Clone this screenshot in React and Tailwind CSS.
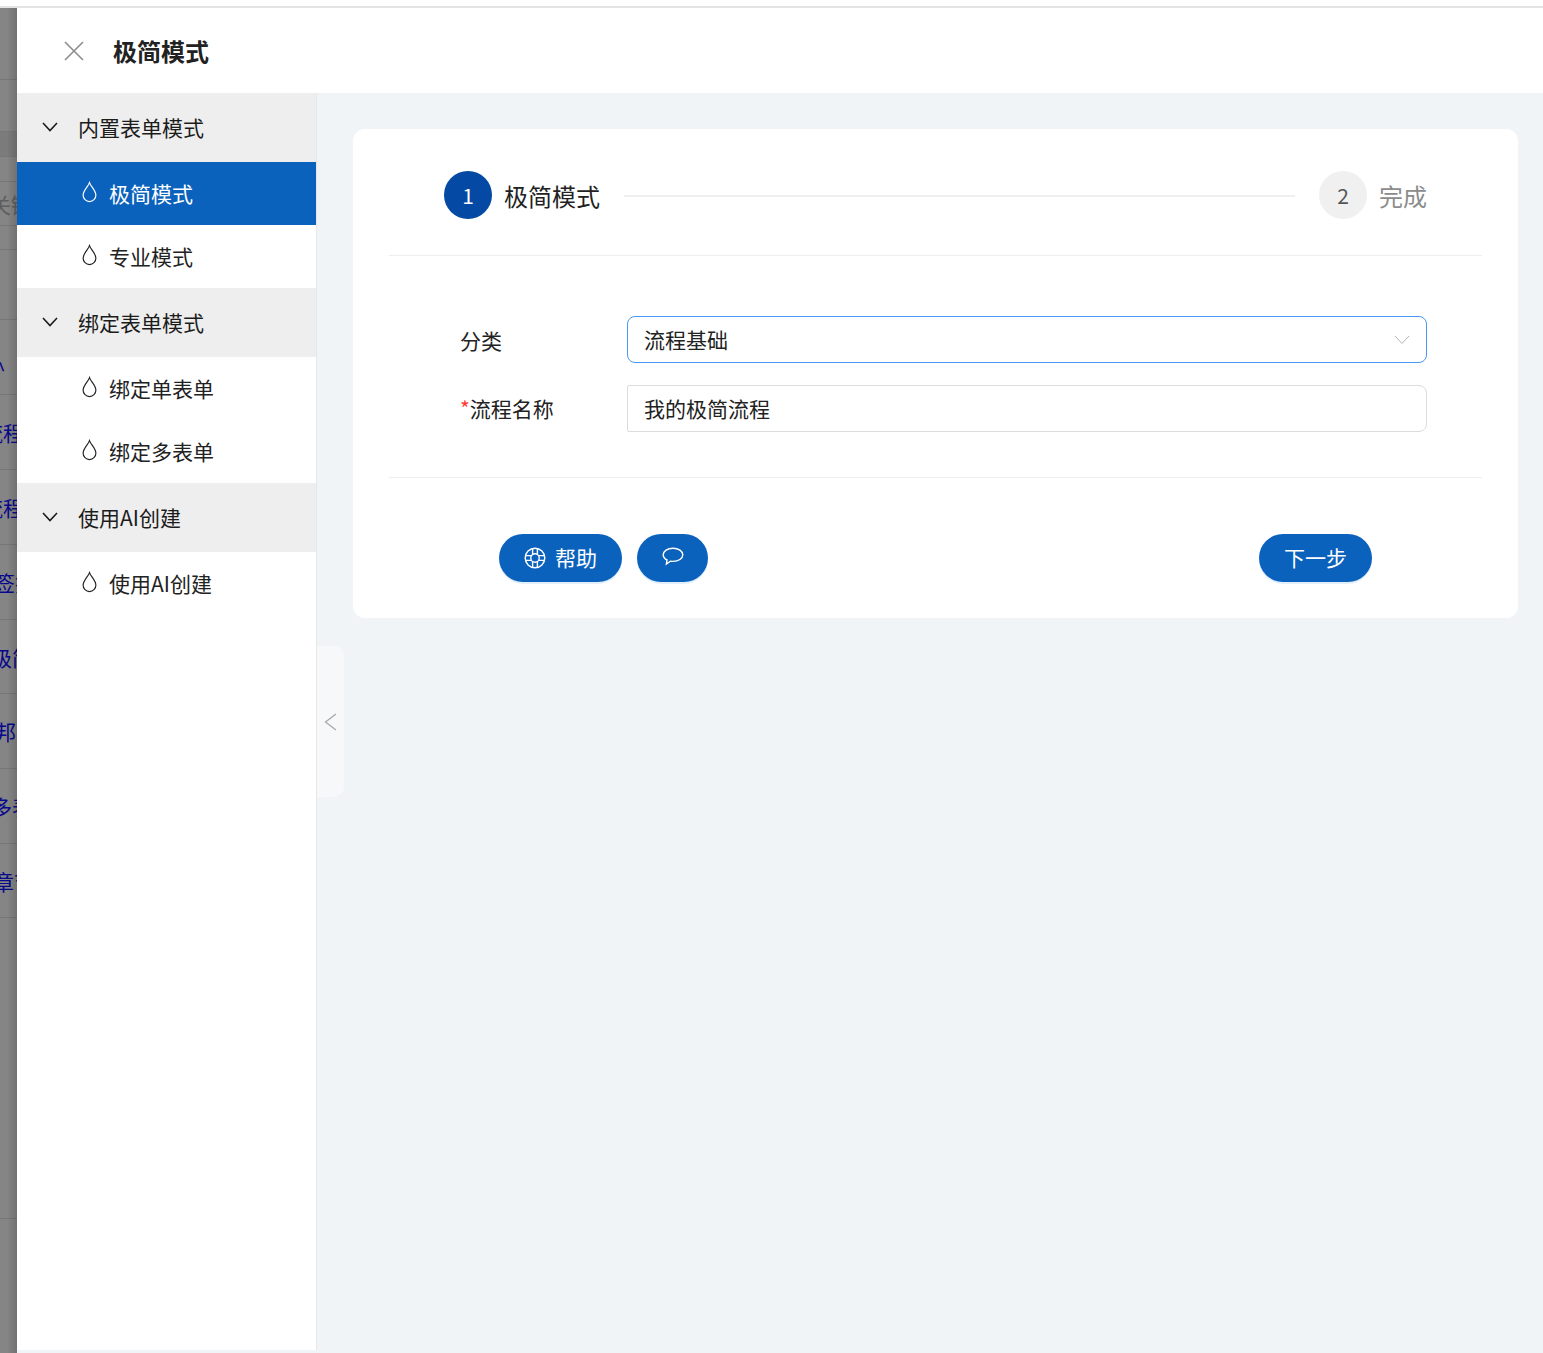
const FONT = "font-['Noto_Sans_CJK_SC','Liberation_Sans',sans-serif]";

const GROUPS = [
  { title: "内置表单模式", items: ["极简模式", "专业模式"] },
  { title: "绑定表单模式", items: ["绑定单表单", "绑定多表单"] },
  { title: "使用AI创建", items: ["使用AI创建"] },
];

// rows of the page behind the drawer, only a sliver of them shows
const BACK_ROWS = [
  { h: "h-[72px]" },
  { h: "h-[52px]" },
  { h: "h-[25px]", band: true },
  { h: "h-[25px]" },
  { h: "h-[44px]", text: "关键", ml: "-ml-[10px] translate-y-px", gray: true },
  { h: "h-[24px]" },
  { h: "h-[70px]" },
  { h: "h-[75px]", text: "^", ml: "-ml-[6px] translate-y-[13px]" },
  { h: "h-[75px]", text: "流程", ml: "-ml-[18px] translate-y-px" },
  { h: "h-[75px]", text: "流程", ml: "-ml-[18px] translate-y-px" },
  { h: "h-[75px]", text: "签批", ml: "-ml-[6px] translate-y-px" },
  { h: "h-[74px]", text: "级简", ml: "-ml-[9px] translate-y-px" },
  { h: "h-[75px]", text: "邦定", ml: "-ml-[5px] translate-y-px" },
  { h: "h-[75px]", text: "多表", ml: "-ml-[9px] translate-y-px" },
  { h: "h-[74px]", text: "章节", ml: "-ml-[7px] translate-y-px" },
  { h: "h-[301px]" },
];

function Drop({ className }) {
  return (
    <svg viewBox="0 0 16 22" fill="none" stroke="currentColor" strokeWidth="1.25" className={className}>
      <path d="M8 1C6.600 5.200 1.200 9.400 1.200 14.400a6.800 6.800 0 0 0 13.600 0C14.800 9.400 9.400 5.200 8 1Z" />
    </svg>
  );
}

function Chevron({ className, width = 1.6 }) {
  return (
    <svg viewBox="0 0 16 10" fill="none" stroke="currentColor" strokeWidth={width} className={className}>
      <path d="M1 1l7 7.500L15 1" />
    </svg>
  );
}

function LifeRing() {
  return (
    <svg viewBox="0 0 22 22" fill="none" stroke="currentColor" strokeWidth="1.4" className="h-[22px] w-[22px]">
      <circle cx="11" cy="11" r="9.800" />
      <circle cx="11" cy="11" r="4.200" />
      <path d="M8.600 1.600v6M13.400 1.600v6M8.600 14.400v6M13.400 14.400v6M1.600 8.600h6M1.600 13.400h6M14.400 8.600h6M14.400 13.400h6" />
    </svg>
  );
}

function Bubble() {
  return (
    <svg viewBox="0 0 22 20" fill="none" stroke="currentColor" strokeWidth="1.4" className="h-[20px] w-[22px] -translate-y-[1px]">
      <path d="M11 1.200c5.500 0 9.800 2.900 9.800 6.600s-4.300 6.600-9.800 6.600c-.9 0-1.700-.1-2.500-.2l-4.100 2.900.6-4.100C2.600 11.800 1.200 9.900 1.200 7.800 1.200 4.100 5.500 1.200 11 1.200Z" />
    </svg>
  );
}

function BackStrip() {
  return (
    <div className="relative w-[17px] shrink-0 overflow-hidden bg-[#858585]">
      {BACK_ROWS.map((row, i) => (
        <div
          key={i}
          className={`${row.h} flex items-center whitespace-nowrap border-b border-[#777777] text-[21px] ${
            row.gray ? "text-[#5e5e5e]" : "text-[#08088c]"
          } ${row.band ? "bg-[#7b7b7b]" : ""}`}
        >
          <span className={row.ml}>{row.text}</span>
        </div>
      ))}
      <div className="absolute inset-y-0 right-0 w-[10px] bg-gradient-to-r from-transparent to-black/15" />
    </div>
  );
}

function SideMenu() {
  return (
    <div className="flex w-[300px] shrink-0 flex-col border-r border-[#e8e8e8] bg-white">
      {GROUPS.map((group) => (
        <div key={group.title}>
          <div className="flex h-[69px] items-center bg-[#eeeeee] pl-[25px] text-[21px] text-[#1c1c1c]">
            <Chevron className="mr-[20px] h-[10px] w-[16px] -translate-y-[1px]" />
            {group.title}
          </div>
          {group.items.map((item) => {
            const active = item === "极简模式";
            return (
              <div
                key={item}
                className={`flex h-[63px] items-center pl-[65px] text-[21px] ${
                  active ? "bg-[#0b62bd] text-white" : "text-[#222222]"
                }`}
              >
                <Drop className="mr-[12px] h-[22px] w-[15px] -translate-y-[2px]" />
                {item}
              </div>
            );
          })}
        </div>
      ))}
    </div>
  );
}

function Step({ num, label, active }) {
  return (
    <div className="flex items-center gap-3">
      <div
        className={`flex h-12 w-12 items-center justify-center rounded-full text-[21px] ${
          active ? "bg-[#0449a3] text-white" : "bg-[#f0f0f0] text-[#555555]"
        }`}
      >
        <span className="translate-y-px">{num}</span>
      </div>
      <span className={`translate-y-px text-2xl ${active ? "text-[#222222]" : "text-[#8c8c8c]"}`}>{label}</span>
    </div>
  );
}

function FormRow({ label, required, focused, value }) {
  return (
    <div className="flex items-center pl-[71px] pr-[55px]">
      <div className={`w-[167px] text-[21px] text-[#222222] ${focused ? "translate-y-px" : ""}`}>
        {required && <span className="text-[#ff3b30]">*</span>}
        {label}
      </div>
      <div
        className={`flex h-[47px] flex-1 items-center justify-between border pl-[16px] pr-[16px] text-[21px] text-[#222222] ${
          focused ? "rounded-[8px] border-[#4a97f5]" : "rounded-l-[2px] rounded-r-[8px] border-[#dcdcdc]"
        }`}
      >
        {value}
        {focused && <Chevron width={1} className="h-[10px] w-[16px] text-[#b5b5b5]" />}
      </div>
    </div>
  );
}

function PillButton({ children, className }) {
  return (
    <button
      className={`flex h-12 items-center justify-center rounded-full bg-[#0b62bd] text-[21px] text-white shadow-[0_2px_0_#e3f0fc] ${className}`}
    >
      {children}
    </button>
  );
}

export default function App() {
  return (
    <div className={`${FONT} flex h-[1353px] w-full flex-col overflow-hidden bg-white`}>
      <div className="h-[8px] shrink-0 border-b-2 border-[#e4e4e4]" />
      <div className="flex min-h-0 flex-1">
        <BackStrip />
        <div className="flex min-w-0 flex-1 flex-col bg-[#f1f4f7]">
          <div className="flex h-[85px] shrink-0 items-center bg-white pl-[47px]">
            <svg viewBox="0 0 20 20" fill="none" stroke="currentColor" strokeWidth="1.6" className="h-5 w-5 text-[#8c8c8c]">
              <path d="M1 1l18 18M19 1L1 19" />
            </svg>
            <span className="ml-[29px] text-2xl font-bold text-[#222222]">极简模式</span>
          </div>
          <div className="flex min-h-0 flex-1 pb-[3px]">
            <SideMenu />
            <div className="relative flex-1 pl-[36px] pr-[25px] pt-[36px]">
              <div className="absolute left-0 top-[553px] flex h-[151px] w-[27px] items-center justify-center rounded-r-[10px] bg-[#f7f8fa]">
                <svg viewBox="0 0 13 18" fill="none" stroke="currentColor" strokeWidth="1.3" className="h-[18px] w-[13px] text-[#a8a8a8]">
                  <path d="M12 1L1.500 9 12 17" />
                </svg>
              </div>
              <div className="h-[489px] rounded-[12px] bg-white px-[36px] pt-[42px]">
                <div className="flex h-[85px] items-start border-b border-[#eeeeee] px-[55px]">
                  <Step num="1" label="极简模式" active />
                  <div className="mx-[24px] mt-[24px] h-[2px] flex-1 bg-[#efefef]" />
                  <Step num="2" label="完成" />
                </div>
                <div className="flex h-[222px] flex-col gap-[22px] border-b border-[#eeeeee] pt-[60px]">
                  <FormRow label="分类" value="流程基础" focused />
                  <FormRow label="流程名称" value="我的极简流程" required />
                </div>
                <div className="flex items-center justify-between pl-[110px] pr-[110px] pt-[56px]">
                  <div className="flex gap-[15px]">
                    <PillButton className="w-[123px] gap-[9px]">
                      <LifeRing />
                      帮助
                    </PillButton>
                    <PillButton className="w-[71px]">
                      <Bubble />
                    </PillButton>
                  </div>
                  <PillButton className="w-[113px]">下一步</PillButton>
                </div>
              </div>
            </div>
          </div>
        </div>
      </div>
    </div>
  );
}
